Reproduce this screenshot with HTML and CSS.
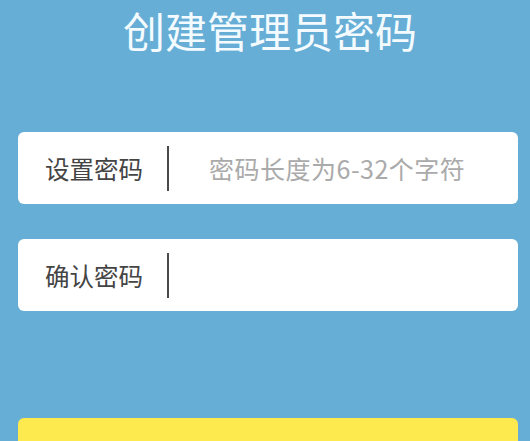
FILE: index.html
```html
<!DOCTYPE html>
<html lang="zh-CN">
<head>
<meta charset="utf-8">
<title>创建管理员密码</title>
<link rel="stylesheet" href="styles.css">
</head>
<body>
<div class="page">
  <h1 class="title">创建管理员密码</h1>
  <div class="form">
    <div class="field">
      <span class="label">设置密码</span>
      <span class="divider"></span>
      <span class="placeholder">密码长度为6-32个字符</span>
    </div>
    <div class="field">
      <span class="label">确认密码</span>
      <span class="divider"></span>
      <span class="placeholder"></span>
    </div>
  </div>
  <div class="button">确定</div>
</div>
</body>
</html>
```
FILE: styles.css
```css
html, body {
  margin: 0;
  padding: 0;
  background: #66aed6;
}
body {
  font-family: "Noto Sans CJK SC", "Noto Sans", sans-serif;
  width: 530px;
  height: 441px;
  overflow: hidden;
}
.page {
  padding: 0 12px 0 18px;
}
.title {
  margin: 0;
  padding-top: 4px;
  height: 128px;
  font-size: 42px;
  line-height: 52px;
  font-weight: 400;
  color: #f4fbff;
  text-align: center;
  padding-left: 4px;
}
.form {
  display: flex;
  flex-direction: column;
  gap: 35px;
}
.field {
  height: 72px;
  background: #ffffff;
  border-radius: 6px;
  display: flex;
  align-items: center;
  padding-left: 27px;
}
.label {
  font-size: 24.5px;
  color: #444444;
  width: 98px;
  white-space: nowrap;
}
.divider {
  width: 2px;
  height: 45px;
  background: #4a4a4a;
  margin-left: 24px;
}
.placeholder {
  margin-left: 40px;
  font-size: 25px;
  color: #aaaaaa;
  white-space: nowrap;
  letter-spacing: 0.5px;
}
.button {
  margin-top: 107px;
  height: 72px;
  background: #fdea4f;
  border-radius: 6px;
  font-size: 24px;
  color: #333333;
  text-align: center;
  line-height: 72px;
}
```
